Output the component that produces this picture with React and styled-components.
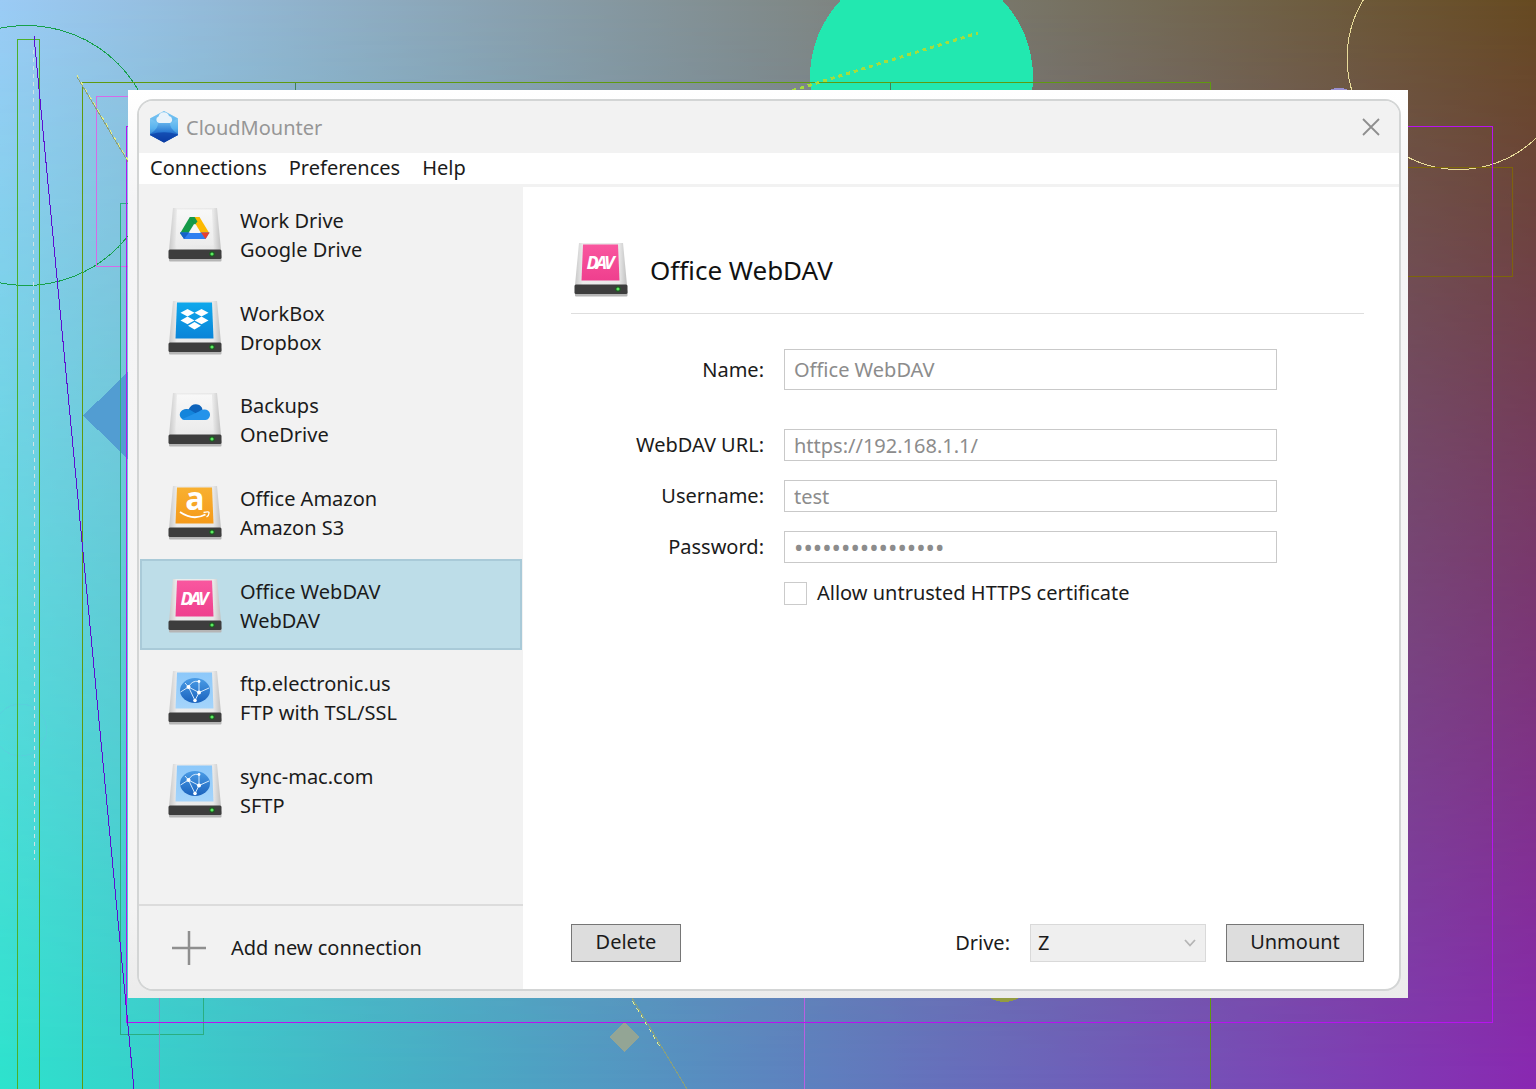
import React, { useState } from 'react';
import styled, { createGlobalStyle } from 'styled-components';

const GlobalStyle = createGlobalStyle`
    * {
        box-sizing: border-box;
    }

    body {
        margin: 0;
        font-family: "Noto Sans", sans-serif;
        font-size: 20px;
        line-height: 28px;
        color: #1b1b1b;
    }

    button, input, select {
        font: inherit;
        color: inherit;
        margin: 0;
    }
`;

const Page = styled.div`
    position: relative;
    display: flex;
    min-height: 100vh;
    padding: 90px 128px 91px;
    overflow: hidden;
    background: linear-gradient(to right, #2de3cd, #8a28b3);
`;

const TopTint = styled.div`
    position: absolute;
    inset: 0;
    background: linear-gradient(to right, #9bcbf5, #664a20);
    mask-image: linear-gradient(to bottom, #000, transparent);
`;

const Shapes = styled.svg`
    position: absolute;
    inset: 0;
    width: 100%;
    height: 100%;
`;

const Frame = styled.div`
    position: relative;
    flex: 1;
    display: flex;
    padding: 9px 7px 7px 9px;
    background: linear-gradient(to bottom, #ffffff, #f5f5f6 12%, #f4f4f4 90%, #ebebeb);
`;

const Window = styled.div`
    flex: 1;
    display: flex;
    flex-direction: column;
    border: 2px solid #d3d5d5;
    border-radius: 16px;
    overflow: hidden;
    background: #fff;
`;

const TitleBar = styled.header`
    display: flex;
    align-items: center;
    gap: 7px;
    height: 52px;
    padding: 0 18px 0 10px;
    background: #f2f2f2;
`;

const AppName = styled.h1`
    flex: 1;
    margin: 0;
    padding-top: 2px;
    font-size: 20px;
    font-weight: 400;
    color: #969696;
`;

const CloseButton = styled.button`
    display: flex;
    padding: 0;
    border: 0;
    background: none;
    cursor: pointer;
`;

const MenuBar = styled.nav`
    display: flex;
    gap: 22px;
    height: 34px;
    padding: 0 11px;
    border-bottom: 3px solid #f2f2f2;
`;

const MenuItem = styled.button`
    padding: 0 0 2px;
    border: 0;
    background: none;
    cursor: pointer;
`;

const Body = styled.div`
    flex: 1;
    display: flex;
`;

const Sidebar = styled.aside`
    display: flex;
    flex-direction: column;
    width: 384px;
    background: #f2f2f2;
`;

const ConnectionList = styled.div`
    display: flex;
    flex-direction: column;
    justify-content: space-between;
    min-height: 648px;
    padding: 1px 1px 0;
`;

const Connection = styled.button`
    display: flex;
    align-items: center;
    gap: 18px;
    height: 91px;
    padding: 3px 26px 0;
    border: 2px solid ${props => props.$active ? '#a9cad8' : 'transparent'};
    background: ${props => props.$active ? '#bddde8' : 'transparent'};
    text-align: left;
    cursor: pointer;
`;

const Line = styled.span`
    display: block;
    line-height: 29px;
`;

const AddButton = styled.button`
    display: flex;
    align-items: center;
    gap: 25px;
    height: 85px;
    margin-top: auto;
    padding: 0 33px;
    border: 0;
    border-top: 2px solid #dcdcdc;
    background: none;
    cursor: pointer;
`;

const Main = styled.main`
    flex: 1;
    display: flex;
    flex-direction: column;
    padding: 48px 35px 27px 48px;
`;

const Heading = styled.div`
    display: flex;
    align-items: center;
    gap: 22px;
    height: 79px;
    padding: 0 3px 9px;
    border-bottom: 1px solid #dedede;
`;

const Title = styled.h2`
    margin: 0;
    font-size: 26px;
    font-weight: 400;
    color: #111;
`;

const Form = styled.form`
    display: flex;
    flex-direction: column;
    gap: 19px;
    padding: 35px 87px 0 0;
`;

const Field = styled.div`
    display: grid;
    grid-template-columns: 193px 1fr;
    align-items: center;
    gap: 20px;
    margin-bottom: ${props => props.$tall ? '20px' : '0'};
`;

const Label = styled.label`
    text-align: right;
`;

const Input = styled.input`
    width: 100%;
    height: ${props => props.$tall ? '41px' : '32px'};
    padding: 0 9px;
    border: 1px solid #c9c9c9;
    border-radius: 0;
    background: #fff;
    color: #8c8c8c;
    outline: none;

    &[type="password"] {
        font-size: 25px;
    }
`;

const CheckRow = styled.div`
    display: flex;
    align-items: center;
    gap: 10px;
    padding-left: 213px;
    height: 22px;
`;

const Checkbox = styled.input`
    appearance: none;
    width: 23px;
    height: 23px;
    margin: 0;
    border: 1px solid #cbcbcb;
    background: #fff;

    &:checked {
        background: #6aaee0;
    }
`;

const Footer = styled.footer`
    display: flex;
    align-items: center;
    gap: 20px;
    margin-top: auto;
`;

const Button = styled.button`
    width: ${props => props.$wide ? '138px' : '110px'};
    height: 38px;
    padding: 0 0 3px;
    border: 1px solid #767676;
    background: #dddddd;
    cursor: pointer;
`;

const DriveLabel = styled.label`
    margin-left: auto;
`;

const SelectBox = styled.div`
    display: grid;
    width: 176px;
    align-items: center;

    & > * {
        grid-area: 1 / 1;
    }

    & > svg {
        justify-self: end;
        margin-right: 10px;
        pointer-events: none;
    }
`;

const Select = styled.select`
    appearance: none;
    width: 100%;
    height: 38px;
    padding: 0 7px;
    border: 1px solid #d9d9d9;
    border-radius: 0;
    background: #efefef;
`;

const Disk = styled.svg`
    flex: none;
    overflow: visible;
`;

function Backdrop() {
    return (
        <Shapes viewBox="0 0 1536 1089" preserveAspectRatio="xMidYMid slice" fill="none" shapeRendering="crispEdges" aria-hidden="true">
            <circle cx="921.5" cy="77" r="111.5" fill="#22e8b0" />
            <path d="M83 415.5 L128 372 L173 415.5 L128 459 Z" fill="#4f98d0" opacity="0.9" />
            <path d="M624.5 1022 L640 1037 L624.5 1052 L609.5 1037 Z" fill="#93a595" />
            <circle cx="1004.5" cy="974" r="28" fill="#939c40" />
            <circle cx="1339" cy="114" r="26" fill="#9a90d0" />
            <circle cx="26" cy="155.5" r="130" stroke="#16a04b" />
            <circle cx="20.5" cy="730" r="26" stroke="#5ccbdd" opacity="0.6" />
            <circle cx="1458.5" cy="58" r="111.5" stroke="#e9dc9a" />
            <rect x="17.5" y="39.5" width="22" height="1100" stroke="#4cb02a" />
            <rect x="82.5" y="82.5" width="1128" height="1100" stroke="#5f9a10" />
            <rect x="96.5" y="96.5" width="400" height="170" stroke="#d66ae8" />
            <rect x="120.5" y="203.5" width="83" height="831" stroke="#2aae80" />
            <rect x="1300.5" y="167.5" width="212" height="109" stroke="#7d6608" />
            <path d="M295.5 83 V100 M890.5 83 V100" stroke="#3f7f5c" />
            <path d="M159.5 990 V1089" stroke="#7f8fd0" />
            <path d="M804.5 990 V1089" stroke="#b95fe0" />
            <rect x="126.5" y="126.5" width="1366" height="896" stroke="#b812f0" />
            <path d="M77 77 L687 1089" stroke="#8aa07c" />
            <path d="M77 75 L660 1047" stroke="#e6f08c" strokeDasharray="4 4" />
            <path d="M33.5 50 L34.5 860" stroke="#cfe3e6" strokeDasharray="4 4" />
            <path d="M34 36 L134 1089" stroke="#5c0fd0" />
            <path d="M785 93 L978 33" stroke="#a4dd3e" strokeWidth="3" strokeDasharray="4 4" />
        </Shapes>
    );
}

function Logo() {
    return (
        <svg width="30" height="32" viewBox="0 0 30 32" aria-hidden="true">
            <defs>
                <linearGradient id="logoFill" x1="0" y1="0" x2="0" y2="1">
                    <stop offset="0" stopColor="#9ad8f7" />
                    <stop offset="0.55" stopColor="#58b2ee" />
                    <stop offset="1" stopColor="#1657b8" />
                </linearGradient>
                <linearGradient id="logoBeam" x1="0" y1="0" x2="0" y2="1">
                    <stop offset="0" stopColor="#6cbcf0" />
                    <stop offset="0.5" stopColor="#2b7bd4" />
                    <stop offset="1" stopColor="#083596" />
                </linearGradient>
            </defs>
            <path d="M15 0 L29 7.5 V24 L15 31.5 L1 24 V7.5 Z" fill="url(#logoFill)" />
            <path d="M15 0 L29 7.5 L15 15 L1 7.5 Z" fill="#5fb4ec" opacity="0.6" />
            <path d="M9 10 H21 Q20 18 29 23 V24 L15 31.5 L1 24 V23 Q10 18 9 10 Z" fill="url(#logoBeam)" />
            <path d="M1 23.500 Q15 19 29 23.500 V24 L15 31.5 L1 24 Z" fill="#0b3fa8" opacity="0.7" />
            <path d="M10 12 a3.400 3.400 0 0 1 -.5 -6.500 a5.500 5.500 0 0 1 10.500 -.6 a3.700 3.700 0 0 1 .8 7.100 Z" fill="#e9f3fa" />
        </svg>
    );
}

const tileColors = {
    dropbox: ['#0fa8ec', '#0a84d8'],
    amazon: ['#f8b030', '#f59a1a'],
    webdav: ['#f9579f', '#ef3f8e'],
    server: ['#8cc8fa', '#a4d4fb'],
};

function DriveArt({ kind, id }) {
    if (kind === 'google') {
        return (
            <g>
                <path d="M21.8 10 L12 26.5 L16.7 32 L27 15.5 Z" fill="#149a48" />
                <path d="M21.8 10 H31.5 L27 17.5 Z" fill="#0b8038" />
                <path d="M31.5 10 L41.5 26.5 H33.2 L23.5 10 Z" fill="#fcb900" />
                <path d="M21.8 10 H26.6 L29.5 14.5 L27 17.5 Z" fill="#149a48" />
                <path d="M12 25.5 H41.5 L37.5 32 H16 Z" fill="#2f80f0" />
                <path d="M12 25.5 H21 L16 32 Z" fill="#1762c8" />
                <path d="M33 25.5 H41.5 L37.5 32 Z" fill="#e8402f" />
                <path d="M26.8 17.5 L32.5 26 H21.3 Z" fill="#f6f6f6" />
            </g>
        );
    }
    if (kind === 'onedrive') {
        return (
            <g>
                <path d="M17 27 a5 5 0 0 1 -.5 -9.500 q2 -.8 4 0 q3 -6 9 -5 q4 .8 5 5 L28 26 Z" fill="#0d63bb" />
                <path d="M16.500 28 a5.200 5.200 0 0 1 1 -10.500 q3 -.8 6 1.200 L37 27 Z" fill="#1385dc" />
                <path d="M14 27.200 L31 19.500 q1.800 -2 5 -2 a5.300 5.300 0 0 1 1.500 10.500 H17 Z" fill="#2493ea" />
            </g>
        );
    }
    if (kind === 'dropbox') {
        return (
            <g fill="#fff">
                <path d="M19.5 9 L26.5 12.8 L19.5 16.6 L12.5 12.8 Z" />
                <path d="M33.5 9 L40.5 12.8 L33.5 16.6 L26.5 12.8 Z" />
                <path d="M19.5 16.6 L26.5 20.4 L19.5 24.2 L12.5 20.4 Z" />
                <path d="M33.5 16.6 L40.5 20.4 L33.5 24.2 L26.5 20.4 Z" />
                <path d="M26.5 22 L33 25.7 L26.5 29.5 L20 25.7 Z" />
            </g>
        );
    }
    if (kind === 'amazon') {
        return (
            <g>
                <text x="27" y="25" textAnchor="middle" fontFamily="Open Sans" fontWeight="700" fontSize="32" fill="#fff">a</text>
                <path d="M12 27 Q25 36 37.5 29.5" stroke="#fff" strokeWidth="1.8" fill="none" />
                <path d="M35.5 27.5 Q41.5 26 41 28 Q41 30.5 38.5 32" stroke="#fff" strokeWidth="1.3" fill="none" />
            </g>
        );
    }
    if (kind === 'webdav') {
        return (
            <text x="26.5" y="27" textAnchor="middle" fontFamily="Open Sans" fontStyle="italic" fontWeight="700" fontSize="18" fill="#fff">
                <tspan>D</tspan><tspan dx="-3">A</tspan><tspan dx="-3">V</tspan>
            </text>
        );
    }
    return (
        <g>
            <linearGradient id={id + 'Globe'} x1="0" y1="0" x2="0" y2="1">
                <stop offset="0" stopColor="#4a9ce6" />
                <stop offset="1" stopColor="#1a62bd" />
            </linearGradient>
            <ellipse cx="27" cy="20.5" rx="15" ry="12.500" fill={'url(#' + id + 'Globe)'} />
            <path d="M20.5 17 Q24 10 31 11.500 M20.5 17 L31 22.5 L31 11.500 M31 22.5 L41 18 M31 22.5 L27 30.5 L20.5 17 L12.500 22 M20.5 17 L17 13"
                stroke="#d5eafc" strokeWidth="1" fill="none" />
            <circle cx="20.5" cy="17" r="2" fill="#fff" />
            <circle cx="31" cy="22.5" r="2" fill="#fff" />
            <circle cx="27" cy="30.5" r="1.8" fill="#fff" />
            <circle cx="31" cy="11.500" r="1.400" fill="#fff" />
        </g>
    );
}

function DriveIcon({ kind, id }) {
    const tile = tileColors[kind];
    return (
        <Disk width="54" height="56" viewBox="0 0 54 56" aria-hidden="true">
            <defs>
                <linearGradient id={id + 'Side'} x1="0" y1="0" x2="1" y2="0">
                    <stop offset="0" stopColor="#c8c8c8" />
                    <stop offset="0.15" stopColor="#ececec" />
                    <stop offset="0.85" stopColor="#e8e8e8" />
                    <stop offset="1" stopColor="#c0c0c0" />
                </linearGradient>
                <linearGradient id={id + 'Tile'} x1="0" y1="0" x2="0" y2="1">
                    <stop offset="0" stopColor={tile ? tile[0] : '#f8f8f8'} />
                    <stop offset="1" stopColor={tile ? tile[1] : '#ececec'} />
                </linearGradient>
            </defs>
            <path d="M5 1 H49 L53 43 H1 Z" fill={'url(#' + id + 'Side)'} />
            <path d="M9 2.5 H44 L45.5 38.5 H7.5 Z" fill={'url(#' + id + 'Tile)'} />
            <rect x="1" y="48" width="52.5" height="6.5" rx="1" fill="#b5b5b5" />
            <rect x="0.5" y="42.5" width="53" height="9.5" rx="1.5" fill="#3d3d3d" />
            <circle cx="44" cy="47" r="2.8" fill="#1d5c22" />
            <circle cx="44" cy="47" r="1.6" fill="#5bed60" />
            <DriveArt kind={kind} id={id} />
        </Disk>
    );
}

const connections = [
    { name: 'Work Drive', type: 'Google Drive', kind: 'google' },
    { name: 'WorkBox', type: 'Dropbox', kind: 'dropbox' },
    { name: 'Backups', type: 'OneDrive', kind: 'onedrive' },
    { name: 'Office Amazon', type: 'Amazon S3', kind: 'amazon' },
    { name: 'Office WebDAV', type: 'WebDAV', kind: 'webdav' },
    { name: 'ftp.electronic.us', type: 'FTP with TSL/SSL', kind: 'server' },
    { name: 'sync-mac.com', type: 'SFTP', kind: 'server' },
];

function App() {
    const [active, setActive] = useState(4);

    return (
        <React.Fragment>
            <GlobalStyle />
            <Page>
                <TopTint />
                <Backdrop />
                <Frame>
                    <Window>
                        <TitleBar>
                            <Logo />
                            <AppName>CloudMounter</AppName>
                            <CloseButton type="button" aria-label="Close">
                                <svg width="20" height="20" viewBox="0 0 20 20" stroke="#8e8e8e" strokeWidth="1.8">
                                    <path d="M2 2 L18 18 M18 2 L2 18" />
                                </svg>
                            </CloseButton>
                        </TitleBar>
                        <MenuBar>
                            <MenuItem type="button">Connections</MenuItem>
                            <MenuItem type="button">Preferences</MenuItem>
                            <MenuItem type="button">Help</MenuItem>
                        </MenuBar>
                        <Body>
                            <Sidebar>
                                <ConnectionList>
                                    {connections.map((item, index) => (
                                        <Connection key={item.name} type="button" $active={index === active} onClick={() => setActive(index)}>
                                            <DriveIcon kind={item.kind} id={'drive' + index} />
                                            <span>
                                                <Line>{item.name}</Line>
                                                <Line>{item.type}</Line>
                                            </span>
                                        </Connection>
                                    ))}
                                </ConnectionList>
                                <AddButton type="button">
                                    <svg width="34" height="34" viewBox="0 0 34 34" stroke="#8f8f8f" strokeWidth="2.5" aria-hidden="true">
                                        <path d="M17 0 V34 M0 17 H34" />
                                    </svg>
                                    Add new connection
                                </AddButton>
                            </Sidebar>
                            <Main>
                                <Heading>
                                    <DriveIcon kind="webdav" id="heading" />
                                    <Title>Office WebDAV</Title>
                                </Heading>
                                <Form>
                                    <Field $tall>
                                        <Label htmlFor="name">Name:</Label>
                                        <Input id="name" type="text" $tall defaultValue="Office WebDAV" />
                                    </Field>
                                    <Field>
                                        <Label htmlFor="url">WebDAV URL:</Label>
                                        <Input id="url" type="text" defaultValue="https://192.168.1.1/" />
                                    </Field>
                                    <Field>
                                        <Label htmlFor="username">Username:</Label>
                                        <Input id="username" type="text" defaultValue="test" />
                                    </Field>
                                    <Field>
                                        <Label htmlFor="password">Password:</Label>
                                        <Input id="password" type="password" autoComplete="off" defaultValue="passwordpassword" />
                                    </Field>
                                    <CheckRow>
                                        <Checkbox id="untrusted" type="checkbox" />
                                        <label htmlFor="untrusted">Allow untrusted HTTPS certificate</label>
                                    </CheckRow>
                                </Form>
                                <Footer>
                                    <Button type="button">Delete</Button>
                                    <DriveLabel htmlFor="drive">Drive:</DriveLabel>
                                    <SelectBox>
                                        <Select id="drive" defaultValue="Z">
                                            <option value="Z">Z</option>
                                        </Select>
                                        <svg width="12" height="8" viewBox="0 0 12 8" fill="none" stroke="#b5b5b5" strokeWidth="1.8" aria-hidden="true">
                                            <path d="M1 1 L6 6.5 L11 1" />
                                        </svg>
                                    </SelectBox>
                                    <Button type="button" $wide>Unmount</Button>
                                </Footer>
                            </Main>
                        </Body>
                    </Window>
                </Frame>
            </Page>
        </React.Fragment>
    );
}

export default App;
